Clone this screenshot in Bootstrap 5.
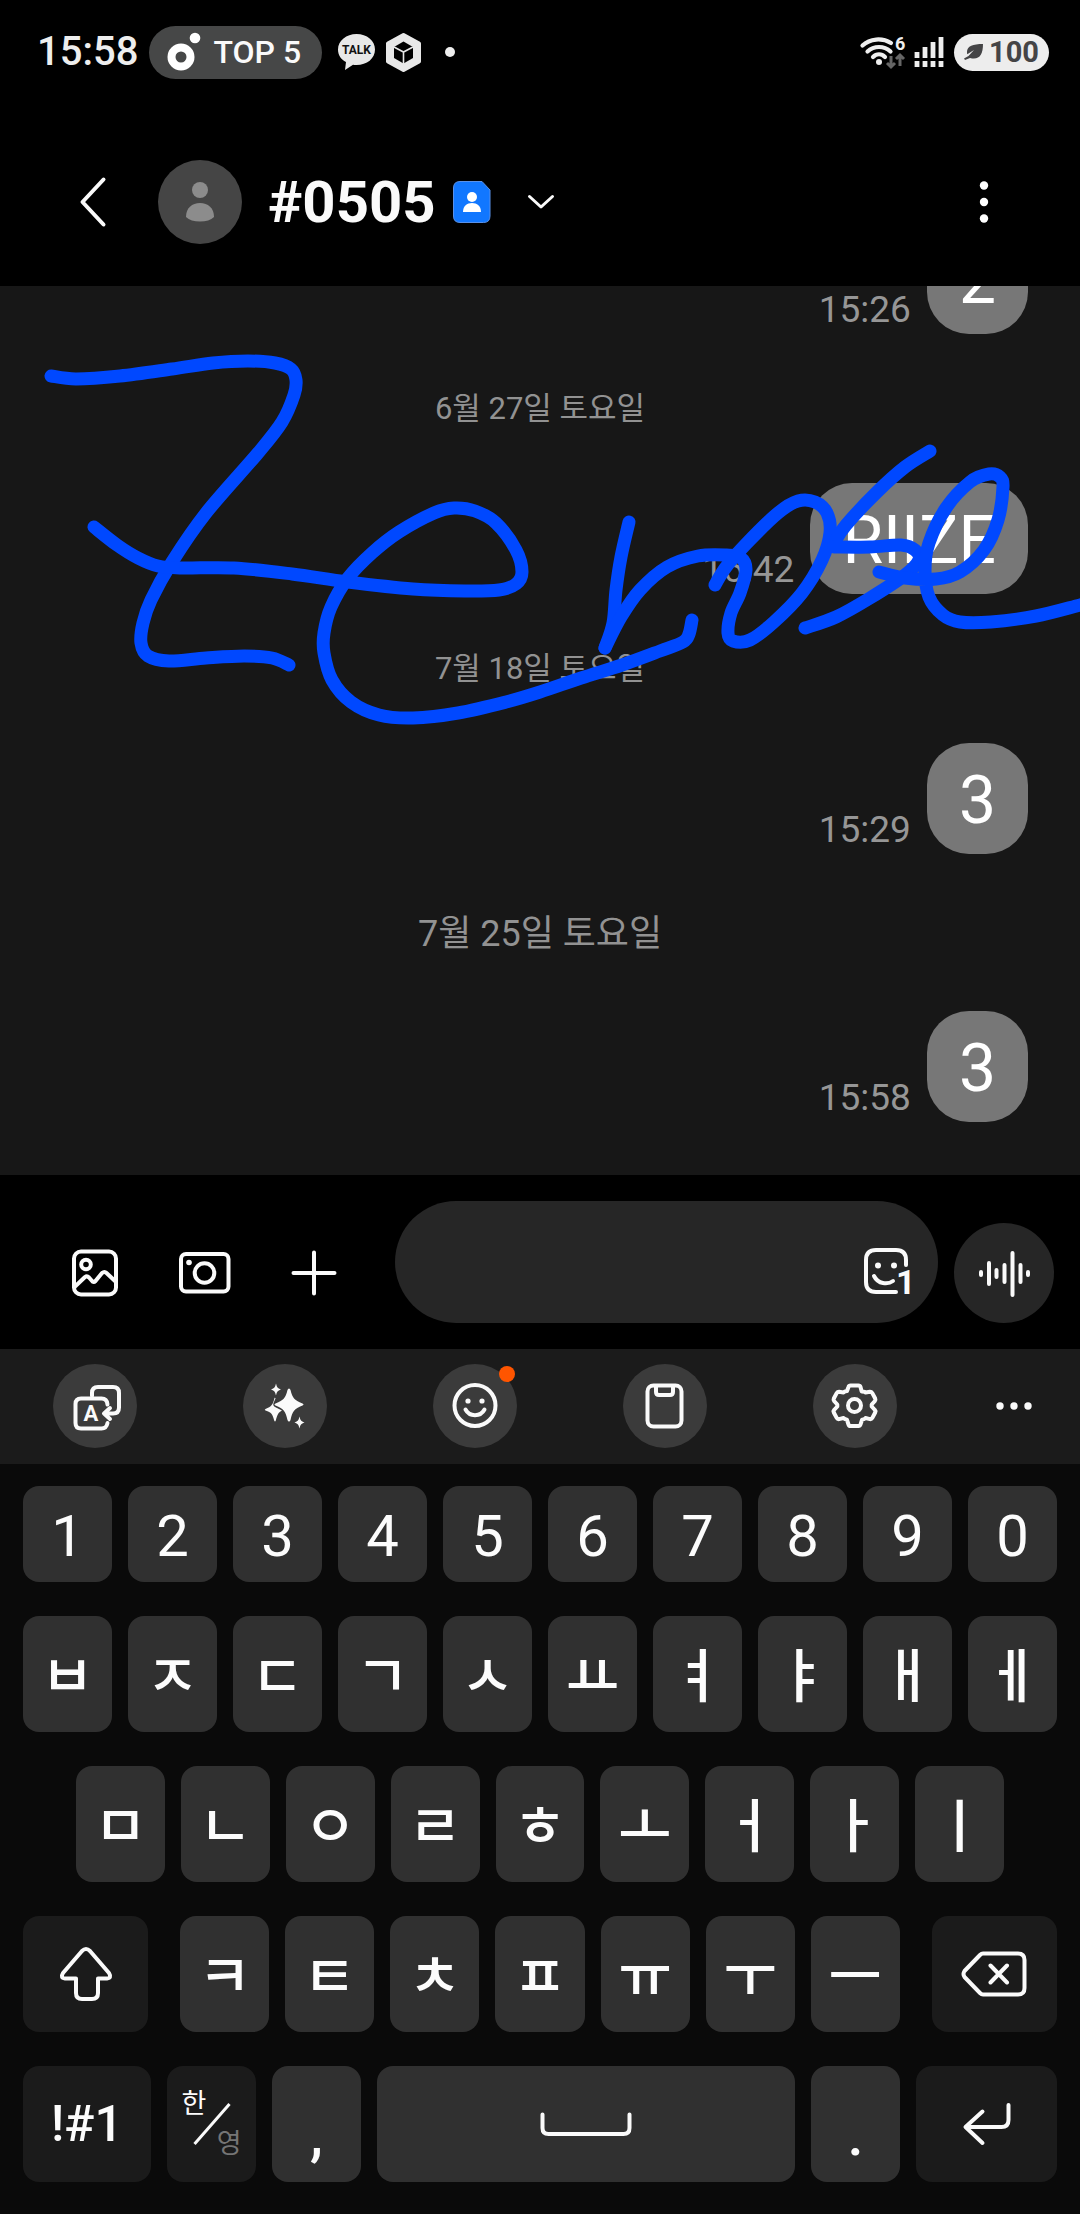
<!DOCTYPE html>
<html lang="ko">
<head>
<meta charset="utf-8">
<meta name="viewport" content="width=device-width, initial-scale=1">
<title>#0505</title>
<link href="https://cdn.jsdelivr.net/npm/bootstrap@5.3.0/dist/css/bootstrap.min.css" rel="stylesheet">
<style>
body { font-family: Roboto, "Noto Sans CJK KR", sans-serif; background: #000; color: #fafafa; height: 100vh; }
svg { display: block; flex: none; overflow: visible; }
button { font-family: inherit; }
.bare { background: none; border: 0; padding: 0; color: #fafafa; display: flex; align-items: center; justify-content: center; }
.ln { fill: none; stroke: #fafafa; stroke-width: 4; stroke-linecap: round; stroke-linejoin: round; }

.status { height: 104px; padding: 0 31px 0 37px; }
.clock { font-size: 40px; font-weight: 500; line-height: 52px; color: #eee; }
.pill { height: 53px; border-radius: 27px; background: #464747; padding: 0 21px 0 18px; font-size: 32px; font-weight: 500; gap: 12px; margin: 0 16px 0 11px; }
.hexa { margin-left: 11px; }
.batt { height: 37px; width: 95px; border-radius: 19px; background: #ededed; color: #444446; font-size: 29px; font-weight: 700; line-height: 37px; gap: 5px; margin-left: 10px; }

.head { padding: 56px 88px 42px 80px; }
.avatar { width: 84px; height: 84px; margin: 0 26px 0 52px; border-radius: 50%; background: #454545; }
.peer { font-size: 58px; line-height: 66px; font-weight: 700; margin: 0 18px 0 0; }
.more { margin-left: 37px; }

.chat { background: #171717; min-height: 0; overflow: hidden; padding: 0 52px 53px; }
.chat > * { flex: none; }
.day { height: 149px; font-size: 31px; color: #929292; padding-top: 2px; }
.day-new { height: 157px; font-size: 36px; }
.sent { gap: 16px; }
.sent time { font-size: 37px; line-height: 44px; padding-bottom: 2px; color: #969696; }
.bubble { height: 111px; border-radius: 42px; background: #777; color: #fff; padding: 0 32px; font-size: 66px; line-height: 115px; }
.ink { left: 0; top: 0; width: 100%; pointer-events: none; }
.ink path { fill: none; stroke: #0048ff; stroke-width: 13; stroke-linecap: round; stroke-linejoin: round; }

.composer { padding: 26px 26px 26px 65px; }
.composer .bare { height: 100px; width: 60px; flex: none; }
.tools { gap: 50px; margin-right: 50px; }
.entry { height: 122px; min-width: 0; border-radius: 61px; background: #262626; padding: 0 21px 0 50px; margin-right: 16px; }
.entry input { background: none; border: 0; outline: 0; color: #fff; font-size: 48px; width: 0; min-width: 0; height: 122px; }
.composer .voice { width: 100px; border-radius: 50%; background: #262626; }

.bar { background: #1b1b1b; padding: 15px 36px 16px 53px; }
.bar .group { margin-right: 87px; }
.bar .round { width: 84px; height: 84px; border-radius: 50%; background: #3b3b3b; }
.dot { width: 16px; height: 16px; right: 2px; top: 2px; border-radius: 50%; background: #ff5500; }

.keys { background: #0a0a0a; padding: 22px 23px 32px; gap: 34px; }
.krow { display: grid; gap: 16px; grid-auto-flow: column; grid-auto-columns: minmax(0, 1fr); }
.krow button { height: 116px; border: 0; border-radius: 16px; background: #303030; color: #fcfcfc; padding: 6px 0 0; font-size: 58px; line-height: 1; display: flex; align-items: center; justify-content: center; font-weight: 500; }
.krow.nums button { height: 96px; padding-top: 4px; font-weight: 400; }
.krow.mid { padding: 0 53px; }
.krow.low { grid-template-columns: 141fr repeat(7, 89fr) 141fr; }
.krow.low button:first-child { margin-right: 16px; }
.krow.low button:last-child { margin-left: 16px; }
.krow.last { grid-template-columns: 128fr 89fr 89fr 418fr 89fr 141fr; }
.krow button.fn { background: #1b1b1b; padding: 0; }
.krow button.flat { padding: 0; }
.krow button.sym { font-size: 50px; }
.krow button.punct { padding-top: 22px; }
.lang { display: grid; width: 60px; height: 72px; font-size: 27px; line-height: 32px; font-weight: 400; }
.lang > * { grid-area: 1 / 1; }
.alt { color: #757575; }
</style>
<script src="https://cdn.jsdelivr.net/npm/bootstrap@5.3.0/dist/js/bootstrap.bundle.min.js"></script>
</head>
<body class="d-flex flex-column m-0">

<div class="status d-flex flex-shrink-0 align-items-center">
  <span class="clock">15:58</span>
  <div class="pill d-flex align-items-center">
    <svg width="34" height="40" viewBox="0 0 34 40"><circle cx="14" cy="25" r="9.500" fill="none" stroke="#fff" stroke-width="8"/><circle cx="28" cy="6" r="5.300" fill="#fff"/></svg>
    <span>TOP 5</span>
  </div>
  <svg width="37" height="36" viewBox="0 0 37 36"><path fill="#e8e8e8" d="M18.500 0C8.500 0 0 6.500 0 15.500c0 5.500 3 10 8 12.500L7 36l8-5.300c1.200.2 2.300.3 3.500.3C29 31 37 24.500 37 15.500S29 0 18.500 0z"/><text x="18.500" y="20" text-anchor="middle" font-size="12" font-weight="700" fill="#111">TALK</text></svg>
  <svg class="hexa" width="35" height="39" viewBox="0 0 35 39"><path fill="#e8e8e8" stroke="#e8e8e8" stroke-width="4" stroke-linejoin="round" d="M17.500 2 33 10.500v18L17.500 37 2 28.500v-18z"/><path fill="#000" d="M17.500 8.500 27 14v11l-9.500 5.500L8 25V14z"/><path fill="none" stroke="#e8e8e8" stroke-width="1.600" d="M8 14l9.500 5 9.500-5M17.500 19v12"/></svg>
  <svg class="ms-4" width="10" height="10" viewBox="0 0 10 10"><circle cx="5" cy="5" r="5" fill="#eee"/></svg>

  <svg class="ms-auto" width="46" height="34" viewBox="0 0 46 34"><g fill="none" stroke="#eee" stroke-linecap="round" stroke-width="4.200"><path d="M2.500 10.500C10 3.500 22 2.500 31 8"/><path d="M7.500 16.500c6.500-6 16.500-6 23 0"/><path d="M13 22c3.500-3.500 8.500-3.500 12 0"/></g><circle cx="19" cy="27" r="3" fill="#eee"/><g fill="none" stroke="#666" stroke-width="3"><path d="M31 21v11M27 28l4 4 4-4M40 31V20M36 24l4-4 4 4"/></g><text x="35" y="15" font-size="18" font-weight="700" fill="#eee">6</text></svg>
  <svg class="ms-2" width="30" height="32" viewBox="0 0 30 32"><g stroke="#eee" stroke-width="4.800" stroke-linecap="butt"><path d="M3 16v6M11 11v11M19 6v16M27 1v21M3 25v6M11 25v6M19 25v6M27 25v6"/></g></svg>
  <div class="batt d-flex align-items-center justify-content-center">
    <svg width="20" height="16" viewBox="0 0 20 16"><path fill="#444446" d="M19 0C9 0 3 2 3 8c0 1 0 1.500.3 2.300L10 6 4.500 12 0 14.500l1 1.500 5-2c9 2.500 13-3 13-14z"/></svg>
    <span>100</span>
  </div>
</div>

<header class="head d-flex flex-shrink-0 align-items-center">
  <button class="bare" type="button" aria-label="뒤로"><svg width="26" height="50" viewBox="0 0 26 50"><path class="ln" d="M23.500 2.500 2.500 25l21 22.500"/></svg></button>
  <div class="avatar d-flex align-items-center justify-content-center"><svg width="28" height="40" viewBox="0 0 28 40"><circle cx="14" cy="8" r="8" fill="#8c8c8c"/><path fill="#8c8c8c" d="M0 35C0 26 6 21 14 21s14 5 14 14c-3 3-8 4.500-14 4.500S3 38 0 35z"/></svg></div>
  <h1 class="peer">#0505</h1>
  <svg width="38" height="42" viewBox="0 0 38 42"><path fill="#1177ff" stroke="#5a91e8" d="M7 .5h22l8 8.500v26q0 6.500-6.500 6.500H7Q.5 41.500.5 35V7Q.5.500 7 .5z"/><circle cx="19" cy="16" r="5" fill="#fff"/><path fill="#fff" d="M10 31c0-6 4-9 9-9s9 3 9 9z"/></svg>
  <button class="bare more" type="button" aria-label="자세히"><svg width="26" height="14" viewBox="0 0 26 14"><path fill="none" stroke="#fafafa" stroke-width="3" stroke-linecap="round" stroke-linejoin="round" d="M1.500 1.500 13 12 24.500 1.500"/></svg></button>
  <button class="bare ms-auto" type="button" aria-label="더보기"><svg width="16" height="42" viewBox="0 0 16 42"><g fill="#fff"><circle cx="8" cy="4.500" r="4.200"/><circle cx="8" cy="21" r="4.200"/><circle cx="8" cy="37.500" r="4.200"/></g></svg></button>
</header>

<main class="chat position-relative flex-grow-1 d-flex flex-column justify-content-end">
  <div class="sent d-flex justify-content-end align-items-end"><time>15:26</time><div class="bubble">2</div></div>
  <div class="day d-flex align-items-center justify-content-center">6월 27일 토요일</div>
  <div class="sent d-flex justify-content-end align-items-end"><time>15:42</time><div class="bubble">RIIZE</div></div>
  <div class="day d-flex align-items-center justify-content-center">7월 18일 토요일</div>
  <div class="sent d-flex justify-content-end align-items-end"><time>15:29</time><div class="bubble">3</div></div>
  <div class="day day-new d-flex align-items-center justify-content-center">7월 25일 토요일</div>
  <div class="sent d-flex justify-content-end align-items-end"><time>15:58</time><div class="bubble">3</div></div>
  <svg class="ink position-absolute" id="ink" viewBox="0 0 1080 889" aria-hidden="true"></svg>
</main>

<form class="composer d-flex flex-shrink-0 align-items-end">
  <div class="tools d-flex">
    <button class="bare" type="button" aria-label="갤러리"><svg width="60" height="60" viewBox="0 0 60 60"><g class="ln"><rect x="9" y="8.500" width="42" height="43" rx="7"/><circle cx="21" cy="21.500" r="4.800"/><path d="M9.500 44 20 34q2-1.500 4 .5l3.500 4q1.500 1 3-.5L37 30q2.500-2 4.500 0l9 8.500"/></g></svg></button>
    <button class="bare" type="button" aria-label="카메라"><svg width="60" height="60" viewBox="0 0 60 60"><g class="ln"><rect x="6" y="11" width="47.500" height="37.500" rx="5"/><circle cx="29.500" cy="30" r="9.800"/></g><circle cx="14" cy="19.500" r="2.800" fill="#fafafa"/></svg></button>
    <button class="bare" type="button" aria-label="추가"><svg width="60" height="60" viewBox="0 0 60 60"><path class="ln" d="M29 9.500v41M8.500 30h41"/></svg></button>
  </div>
  <div class="entry flex-grow-1 d-flex align-items-end">
    <input class="flex-grow-1" id="msg" type="text" aria-label="메시지">
    <button class="bare" type="button" aria-label="스티커"><svg width="60" height="60" viewBox="0 0 60 60"><path class="ln" d="M49 22v-5q0-10-10-10H19Q9 7 9 17v22q0 10 10 10h20"/><path class="ln" d="M17 33q3 6 9 7 6 1 10-2"/><circle cx="21" cy="22.500" r="3" fill="#fafafa"/><circle cx="37" cy="22.500" r="3" fill="#fafafa"/><text x="39" y="51" font-size="34" font-weight="700" fill="#fafafa">1</text></svg></button>
  </div>
  <button class="bare voice" type="button" aria-label="음성"><svg width="60" height="60" viewBox="0 0 60 60"><path class="ln" d="M7 29v3M15 20v21M22.500 27v7M30.500 22v17M38.500 10v42M46.500 22v17M54 29v3"/></svg></button>
</form>

<nav class="bar d-flex flex-shrink-0 align-items-center" aria-label="키보드 도구">
  <div class="group d-flex flex-grow-1 justify-content-between">
    <button class="bare round" type="button" aria-label="번역"><svg width="60" height="60" viewBox="0 0 60 60"><g class="ln"><path d="M42.500 28.500q-.5-6-6-6H16q-5.500 0-5.500 5.500v19q0 5.500 5.500 5.500h20.500q5 0 6-5.500"/><path d="M27 20v-3q0-6 6-6h15q6 0 6 6v14.500q0 6-6 6h-9M45 32l-6 5.500 6 5.500"/></g><text x="26" y="45" text-anchor="middle" font-size="22" font-weight="700" fill="#fafafa">A</text></svg></button>
    <button class="bare round" type="button" aria-label="AI"><svg width="60" height="60" viewBox="0 0 60 60"><g fill="#fafafa"><path d="M34 12.500q1 0 1.500 1.500c2 8 3.500 10 12 13.500q2 1 0 2C39 33 37.500 35 35.500 44q-.5 1.500-1.500 1.500T32.500 44C30.500 35 29 33 20.500 29.500q-2-1 0-2C29 24 30.500 22 32.500 14q.5-1.500 1.500-1.500z"/><path d="M19.500 22c.5-.5 1 0 1 .6l-2 4.400q-1 3 2 4.200l6.500 3.300c-3.500 2-4.500 3.500-6.200 10q-.8 2-1.600 0C17.500 38 16.500 36.500 10.500 34.500q-1.500-.7 0-1.500C16.500 30.500 18 28.500 19.500 22z"/><path d="M21 7.500c1 4 1.500 4.500 5 6-3.500 1.300-4 2-5 6-1-4-1.500-4.700-5-6 3.500-1.500 4-2 5-6zM44.500 40.500c1 4 1.500 4.500 5 6-3.500 1.300-4 2-5 6-1-4-1.500-4.700-5-6 3.500-1.500 4-2 5-6z"/></g></svg></button>
    <button class="bare round position-relative" type="button" aria-label="이모티콘"><svg width="60" height="60" viewBox="0 0 60 60"><circle class="ln" cx="30" cy="29.500" r="20.500"/><path class="ln" d="M20.500 33.500c4 7.500 15 7.500 19 0"/><circle cx="23" cy="25" r="2.600" fill="#fafafa"/><circle cx="37" cy="25" r="2.600" fill="#fafafa"/></svg><span class="dot position-absolute"></span></button>
    <button class="bare round" type="button" aria-label="클립보드"><svg width="60" height="60" viewBox="0 0 60 60"><g class="ln"><rect x="12.500" y="9.500" width="34" height="41" rx="6"/><path d="M21 10v6q0 3 3 3h11q3 0 3-3v-6"/></g></svg></button>
    <button class="bare round" type="button" aria-label="설정"><svg width="60" height="60" viewBox="0 0 60 60"><g class="ln"><circle cx="29.500" cy="29.500" r="6.500"/><path d="M25.500 9.500h8q1.500 0 2 1.500l1.200 4.500q3.300 0 3.800 1l4.500-.8q1.500 0 2.200 1.200l3 5.600q.7 1.500-.3 2.500l-3.200 3.500v2l3.200 3.500q1 1 .3 2.500l-3 5.600q-.7 1.200-2.200 1l-4.500-1.100q-1 1.500-3.500 1.800L35.500 48.500q-.5 1.500-2 1.500h-8q-1.500 0-2-1.500l-1.500-4.700q-2.500-.5-3.500-1.800l-4.500 1.100q-1.500.2-2.200-1l-3-5.600q-.7-1.500.3-2.500l3.200-3.500v-2l-3.200-3.500q-1-1-.3-2.500l3-5.600q.7-1.200 2.200-1.200l4.500.8q1-1.200 3.500-1.500L23.500 11q.5-1.500 2-1.500z"/></g></svg></button>
  </div>
  <button class="bare" type="button" aria-label="더 많은 도구"><svg width="60" height="60" viewBox="0 0 60 60"><g fill="#fafafa"><circle cx="16" cy="30" r="3.700"/><circle cx="30" cy="30" r="3.700"/><circle cx="44" cy="30" r="3.700"/></g></svg></button>
</nav>

<section class="keys d-flex flex-shrink-0 flex-column" aria-label="키보드">
  <div class="krow nums"><button type="button">1</button><button type="button">2</button><button type="button">3</button><button type="button">4</button><button type="button">5</button><button type="button">6</button><button type="button">7</button><button type="button">8</button><button type="button">9</button><button type="button">0</button></div>
  <div class="krow"><button type="button">ㅂ</button><button type="button">ㅈ</button><button type="button">ㄷ</button><button type="button">ㄱ</button><button type="button">ㅅ</button><button type="button">ㅛ</button><button type="button">ㅕ</button><button type="button">ㅑ</button><button type="button">ㅐ</button><button type="button">ㅔ</button></div>
  <div class="krow mid"><button type="button">ㅁ</button><button type="button">ㄴ</button><button type="button">ㅇ</button><button type="button">ㄹ</button><button type="button">ㅎ</button><button type="button">ㅗ</button><button type="button">ㅓ</button><button type="button">ㅏ</button><button type="button">ㅣ</button></div>
  <div class="krow low">
    <button class="fn" type="button" aria-label="시프트"><svg width="52" height="54" viewBox="0 0 52 54"><path class="ln" d="M22 4q4-4 8 0l19 22q3 5-2 5.500H38V46q0 6-6 6H22q-6 0-6-6V31.500H5Q0 31 3 26z"/></svg></button>
    <button type="button">ㅋ</button><button type="button">ㅌ</button><button type="button">ㅊ</button><button type="button">ㅍ</button><button type="button">ㅠ</button><button type="button">ㅜ</button><button type="button">ㅡ</button>
    <button class="fn" type="button" aria-label="지우기"><svg width="66" height="46" viewBox="0 0 66 46"><path class="ln" d="M22 2.500h35q6.500 0 6.500 6.500v28q0 6.500-6.500 6.500H22q-1.500 0-3-1.500L3.500 26q-2-3 0-6L19 4q1.500-1.500 3-1.500zM29.500 14.500 46 31.500M46 14.500 29.500 31.500"/></svg></button>
  </div>
  <div class="krow last">
    <button class="fn sym" type="button">!#1</button>
    <button class="fn" type="button"><span class="lang"><span class="text-start align-self-start">한</span><svg class="align-self-center mx-auto" width="38" height="42" viewBox="0 0 38 42"><path d="M1.500 41 36.500 1" stroke="#fafafa" stroke-width="3"/></svg><span class="alt text-end align-self-end">영</span></span></button>
    <button class="punct" type="button">,</button>
    <button class="flat" type="button" aria-label="스페이스"><svg width="92" height="24" viewBox="0 0 92 24"><path class="ln" d="M2.500 2.500V16q0 6 6 6h75q6 0 6-6V2.500"/></svg></button>
    <button class="punct" type="button">.</button>
    <button class="fn" type="button" aria-label="엔터"><svg width="48" height="42" viewBox="0 0 48 42"><path class="ln" d="M45.500 2v15q0 7-7 7h-35M19.500 8.500 2.500 24l17 16"/></svg></button>
  </div>
</section>

<script>
/* Pen strokes of the handwritten note; each list holds x,y pairs. */
const strokes = [
  [51,90,76,93,120,90,172,83,213,77,248,75,275,77,291,83,296,94,294,109,282,136,258,167,206,227,172,276,151,314,143,337,141,357,148,370,169,375,206,372,244,370,272,372,289,379],
  [94,241,117,259,138,272,158,280,182,282,234,282,292,288,348,296,413,303,465,305,499,304,516,298,522,286,516,264,496,237,475,225,454,222,434,227,399,246,372,267,348,292,331,321,324,347,324,367,332,394,351,416,379,429,413,432,458,427,506,416,540,406,581,392,622,379,660,365,683,356,689,348,692,334],
  [629,236,621,271,616,304,613,337,605,362],
  [605,362,621,331,640,304,667,281,698,270,726,269,741,272,746,284,740,307,731,327,728,347,733,355,750,354,774,336,802,307,822,274,830,247,827,227,815,216,798,215,778,227,747,257,726,281,715,299],
  [930,165,905,181,877,206,846,239,834,257],
  [834,261,870,261,901,259,915,264,919,274,905,289,870,312,836,331,805,342],
  [879,286,905,292,936,293,960,286,984,264,998,234,1003,201,1000,191,989,188,970,196,946,222,929,257,925,284,929,311,943,329,960,336,991,336,1036,330,1080,319,1096,315]
];
const ink = document.getElementById('ink');
for (const s of strokes) {
  const p = [];
  for (let i = 0; i < s.length; i += 2) p.push([s[i], s[i + 1]]);
  let d = 'M' + p[0];
  for (let i = 0; i < p.length - 1; i++) {
    const a = p[i - 1] || p[i], b = p[i], c = p[i + 1], e = p[i + 2] || c;
    d += `C${b[0] + (c[0] - a[0]) / 6},${b[1] + (c[1] - a[1]) / 6} ${c[0] - (e[0] - b[0]) / 6},${c[1] - (e[1] - b[1]) / 6} ${c}`;
  }
  const path = document.createElementNS('http://www.w3.org/2000/svg', 'path');
  path.setAttribute('d', d);
  ink.append(path);
}
</script>
</body>
</html>
